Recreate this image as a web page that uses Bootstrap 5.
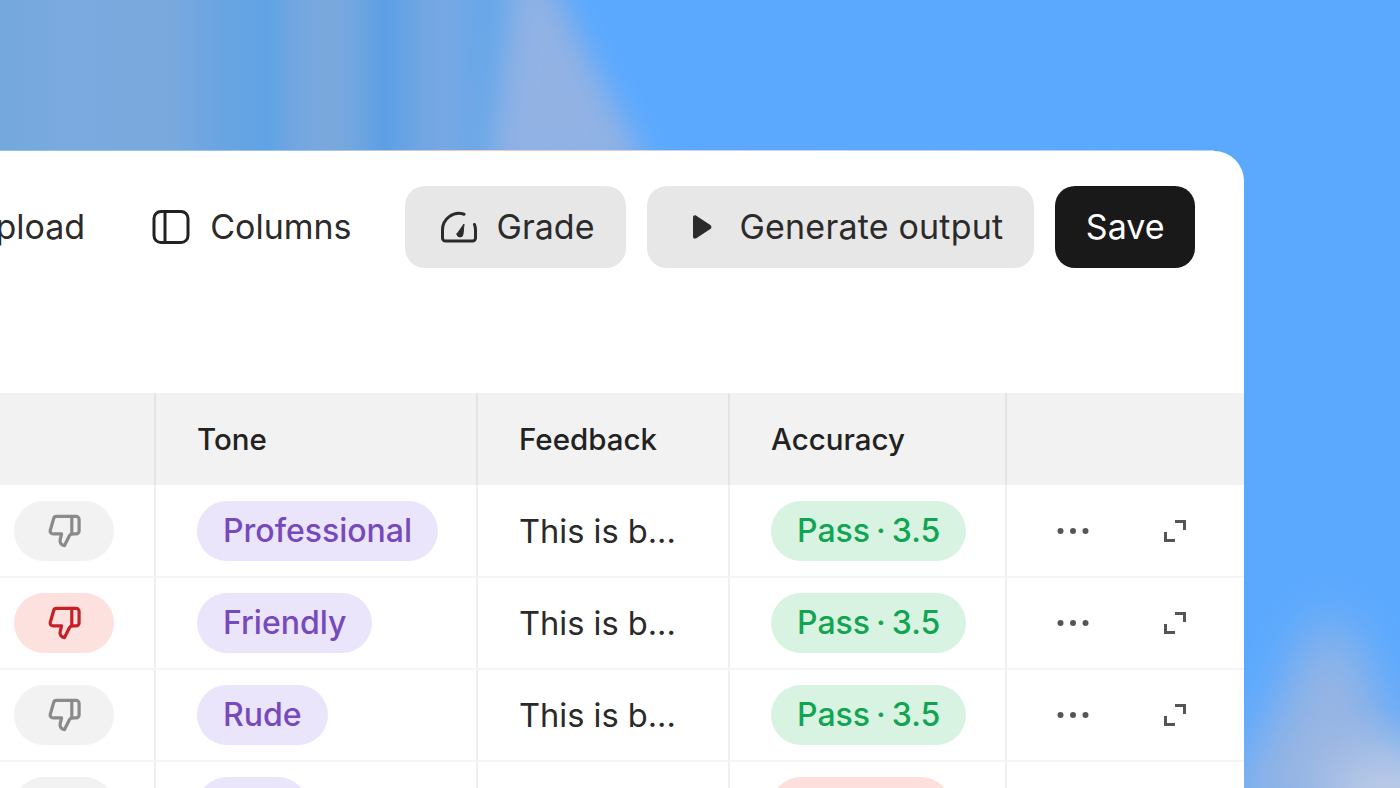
<!DOCTYPE html>
<html lang="en">
<head>
    <meta charset="UTF-8">
    <title>Dataset table</title>
    <link href="https://cdn.jsdelivr.net/npm/bootstrap@5.3.0/dist/css/bootstrap.min.css" rel="stylesheet">
    <script src="https://cdn.jsdelivr.net/npm/bootstrap@5.3.0/dist/js/bootstrap.bundle.min.js"></script>
    <style>
        html, body {
            height: 788px;
            overflow: hidden;
        }
        body {
            position: relative;
            font-family: Inter, "Liberation Sans", sans-serif;
            color: #1c1c1c;
            background-color: #5aa9ff;
            background-image: linear-gradient(90deg, #74a7dd 0, #7aaadf 60px, #7aa9de 170px, #68a4e2 225px, #60a3e4 268px, #74a7e0 300px, #7aa8dc 326px, #74a7df 350px, #5b9fe5 384px, #70a6e3 420px, #76a8e4 445px, #66a7e9 490px, #6aa9ee 530px, #5aa9ff 590px);
            background-size: 100% 151px;
            background-repeat: no-repeat;
            padding: 151px 156px 0 0;
        }
        .backdrop {
            position: absolute;
            inset: 0;
            width: 1400px;
            height: 788px;
        }
        .sheet {
            position: relative;
            width: 1244px;
            height: 637px;
            background: #fff;
            border-top-right-radius: 30px;
        }
        .sheet::before {
            content: "";
            position: absolute;
            left: 0;
            top: -1px;
            width: 1214px;
            height: 1px;
            background: linear-gradient(90deg, #8fc1ee 0, #9cc3ec 300px, #f2c9b8 470px, #eccdc8 560px, #c9cfee 760px, #b4d2f6 1214px);
        }
        .toolbar {
            height: 242px;
            padding: 35px 49px 0 0;
            gap: 21px;
        }
        .tool-btn {
            --bs-btn-border-width: 0;
            --bs-btn-border-radius: 20px;
            --bs-btn-font-size: 34px;
            --bs-btn-line-height: 1;
            --bs-btn-color: #2b2b2b;
            --bs-btn-hover-color: #2b2b2b;
            --bs-btn-active-color: #2b2b2b;
            height: 82px;
            padding: 0 32px 0 35px;
            gap: 20px;
            white-space: nowrap;
        }
        .tool-fill {
            --bs-btn-bg: #e7e7e7;
            --bs-btn-hover-bg: #dedede;
            --bs-btn-active-bg: #dedede;
            gap: 19px;
        }
        .tool-upload {
            padding-right: 11px;
        }
        .tool-play {
            padding: 0 31px 0 45px;
            gap: 27px;
            letter-spacing: .2px;
        }
        .tool-save {
            --bs-btn-bg: #191919;
            --bs-btn-color: #fff;
            --bs-btn-hover-bg: #000;
            --bs-btn-hover-color: #fff;
            padding: 0 30.5px;
        }
        .table-clip {
            height: 395px;
            overflow: hidden;
        }
        .grid-table {
            table-layout: fixed;
            width: 1244px;
            border-collapse: separate;
            border-spacing: 0;
            font-size: 32.6px;
        }
        .grid-table th, .grid-table td {
            height: 92px;
            padding: 0 0 0 41px;
            vertical-align: middle;
            border-bottom: 2px solid #f5f5f5;
            border-right: 2px solid #f0f0f0;
            box-shadow: none;
            color: #2a2a2a;
        }
        .grid-table tbody tr:first-child td {
            height: 93px;
            padding-top: 1px;
        }
        .grid-table th {
            background: #f2f2f2;
            font-size: 29.5px;
            font-weight: 500;
            color: #222;
            border-bottom: 0;
            border-right-color: #e4e4e4;
        }
        .grid-table tr > :last-child {
            border-right: 0;
        }
        .grid-table td.thumb-cell {
            padding-left: 0;
            padding-right: 40px;
            text-align: right;
        }
        .tag {
            display: inline-flex;
            align-items: center;
            height: 60px;
            padding: 0 26px;
            border-radius: 30px;
            font-size: 32px;
            font-weight: 500;
            white-space: nowrap;
            vertical-align: middle;
        }
        .tag-tone {
            background: #ebe5fb;
            color: #7649bc;
        }
        .tag-pass {
            background: #d9f3e3;
            color: #11a552;
            word-spacing: -2.5px;
        }
        .tag-fail {
            background: #fde0dd;
            color: #c52026;
        }
        .stub-tone {
            width: 111px;
        }
        .stub-score {
            width: 180px;
        }
        .tag-thumb {
            width: 100px;
            padding: 0;
            justify-content: center;
            background: #f2f2f2;
            color: #8a8a8a;
        }
        .tag-thumb.is-down {
            background: #fde1df;
            color: #c52026;
        }
        .row-actions {
            padding-left: 9px;
            gap: 75px;
            color: #555;
        }
    </style>
</head>
<body>
    <svg class="backdrop" viewBox="0 0 1400 788" aria-hidden="true">
        <defs>
            <filter id="soft-a" x="-40%" y="-40%" width="180%" height="180%"><feGaussianBlur stdDeviation="15"/></filter>
            <filter id="soft-b" x="-40%" y="-40%" width="180%" height="180%"><feGaussianBlur stdDeviation="26"/></filter>
        </defs>
        <polygon points="518,-30 542,-30 650,170 490,170" fill="#92b2e4" filter="url(#soft-a)"/>
        <polygon points="1322,615 1345,625 1440,820 1220,820" fill="#98b5e3" filter="url(#soft-b)"/>
        <ellipse cx="1395" cy="800" rx="70" ry="50" fill="#bccbe6" filter="url(#soft-b)"/>
    </svg>

    <div class="sheet">
        <div class="toolbar d-flex justify-content-end align-items-start">
            <button class="btn tool-btn tool-upload d-inline-flex align-items-center flex-shrink-0">Upload</button>
            <button class="btn tool-btn d-inline-flex align-items-center flex-shrink-0">
                <svg width="38" height="36" viewBox="0 0 38 36" fill="none" stroke="#222" stroke-width="3"><rect x="2" y="2.500" width="34" height="31" rx="7"/><path d="M13 3v30"/></svg>
                Columns
            </button>
            <button class="btn tool-btn tool-fill d-inline-flex align-items-center flex-shrink-0">
                <svg width="38" height="32" viewBox="0 0 38 32" fill="none" stroke="#2b2b2b" stroke-width="3" stroke-linecap="round" stroke-linejoin="round"><path d="M24 3.200A16.500 16.500 0 0 0 2.500 19v8a3 3 0 0 0 3 3h27a3 3 0 0 0 3-3v-8c0-2-.3-3.800-1-5.500"/><path d="M17 23l7-10-1 10a3 3 0 0 1-6 0z" fill="#2b2b2b" stroke-width="1"/></svg>
                Grade
            </button>
            <button class="btn tool-btn tool-fill tool-play d-inline-flex align-items-center flex-shrink-0">
                <svg width="20" height="26" viewBox="0 0 20 26"><path d="M1 3.500C1 1.500 2.600.7 4.300 1.700l14 9.200c1.500 1 1.500 3.200 0 4.200l-14 9.200C2.600 25.300 1 24.500 1 22.500z" fill="#2b2b2b"/></svg>
                Generate output
            </button>
            <button class="btn tool-btn tool-save d-inline-flex align-items-center flex-shrink-0">Save</button>
        </div>

        <div class="table-clip">
            <table class="table mb-0 grid-table">
                <colgroup>
                    <col style="width:156px">
                    <col style="width:322px">
                    <col style="width:252px">
                    <col style="width:277px">
                    <col>
                </colgroup>
                <thead>
                    <tr>
                        <th></th>
                        <th>Tone</th>
                        <th>Feedback</th>
                        <th>Accuracy</th>
                        <th></th>
                    </tr>
                </thead>
                <tbody id="grid-body"></tbody>
            </table>
        </div>
    </div>

    <script>
        const thumb = '<svg width="35" height="36" viewBox="0 0 24 24" fill="none" stroke="currentColor" stroke-width="2.200" stroke-linecap="round" stroke-linejoin="round"><path d="M17 14V2"/><path d="M9 18.120 10 14H4.170a2 2 0 0 1-1.920-2.560l2.330-8A2 2 0 0 1 6.500 2H20a2 2 0 0 1 2 2v8a2 2 0 0 1-2 2h-2.760a2 2 0 0 0-1.790 1.110L12 22a3.130 3.130 0 0 1-3-3.880Z"/></svg>';
        const dots = '<svg width="32" height="8" viewBox="0 0 32 8" fill="currentColor"><circle cx="3.500" cy="4" r="3"/><circle cx="16" cy="4" r="3"/><circle cx="28.500" cy="4" r="3"/></svg>';
        const expand = '<svg width="22" height="22" viewBox="0 0 22 22" fill="none" stroke="currentColor" stroke-width="3"><path d="M11 1.500h9.500V10"/><path d="M1.500 12v8.500H11"/></svg>';

        // the fourth row is cut by the window, only the tops of its pills show
        const rows = [
            { down: false, tone: 'Professional', score: 'Pass · 3.5' },
            { down: true, tone: 'Friendly', score: 'Pass · 3.5' },
            { down: false, tone: 'Rude', score: 'Pass · 3.5' },
            { down: false, tone: '', score: '' }
        ];

        document.getElementById('grid-body').innerHTML = rows.map(r => `
            <tr>
                <td class="thumb-cell"><span class="tag tag-thumb ${r.down ? 'is-down' : ''}">${thumb}</span></td>
                <td><span class="tag tag-tone ${r.tone ? '' : 'stub-tone'}">${r.tone}</span></td>
                <td>${r.score ? 'This is b...' : ''}</td>
                <td><span class="tag ${r.score ? 'tag-pass' : 'tag-fail stub-score'}">${r.score}</span></td>
                <td>${r.score ? `<div class="row-actions d-flex align-items-center">${dots}${expand}</div>` : ''}</td>
            </tr>
        `).join('');
    </script>
</body>
</html>
